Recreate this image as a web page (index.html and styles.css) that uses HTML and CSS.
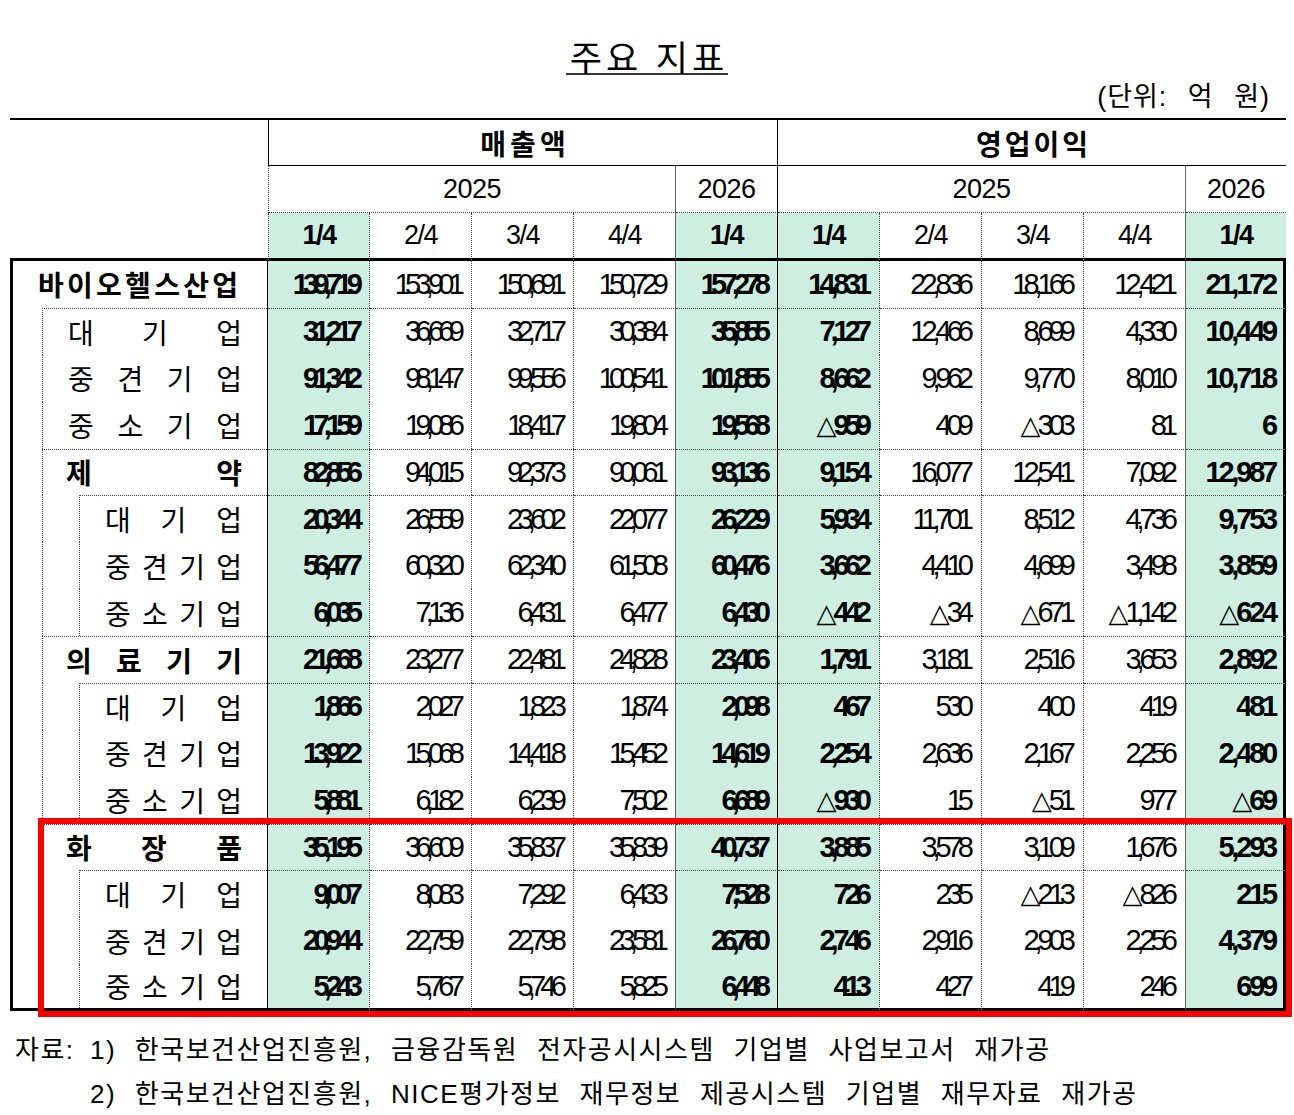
FILE: index.html
```html
<!DOCTYPE html>
<html lang="ko">
<head>
<meta charset="utf-8">
<title>주요 지표</title>
<link rel="stylesheet" href="styles.css">
</head>
<body>
<div class="page">
  <div class="title-wrap"><h1 class="title">주요 지표</h1></div>
  <div class="unit">(단위: 억 원)</div>

  <div class="table-wrap">
    <div class="grid">
      <div class="h-label"></div>
      <div class="h-group h-sales">매출액</div>
      <div class="h-group h-profit">영업이익</div>

      <div class="h-year y-s25">2025</div>
      <div class="h-year y-s26">2026</div>
      <div class="h-year y-p25">2025</div>
      <div class="h-year y-p26">2026</div>

      <div class="qrow">
        <div class="q">1/4</div><div class="q">2/4</div><div class="q">3/4</div><div class="q">4/4</div><div class="q">1/4</div>
        <div class="q">1/4</div><div class="q">2/4</div><div class="q">3/4</div><div class="q">4/4</div><div class="q">1/4</div>
      </div>

      <!-- 바이오헬스산업 -->
      <div class="row">
        <div class="lab"><div class="t t-top"><span>바</span><span>이</span><span>오</span><span>헬</span><span>스</span><span>산</span><span>업</span></div></div>
        <div class="v">139,719</div><div class="v">153,901</div><div class="v">150,691</div><div class="v">150,729</div><div class="v">157,278</div>
        <div class="v">14,831</div><div class="v">22,836</div><div class="v">18,166</div><div class="v">12,421</div><div class="v">21,172</div>
      </div>
      <div class="row start">
        <div class="lab"><div class="b1 bt"><div class="t t-sub1"><span>대</span><span>기</span><span>업</span></div></div></div>
        <div class="v">31,217</div><div class="v">36,669</div><div class="v">32,717</div><div class="v">30,384</div><div class="v">35,855</div>
        <div class="v">7,127</div><div class="v">12,466</div><div class="v">8,699</div><div class="v">4,330</div><div class="v">10,449</div>
      </div>
      <div class="row">
        <div class="lab"><div class="b1"><div class="t t-sub1"><span>중</span><span>견</span><span>기</span><span>업</span></div></div></div>
        <div class="v">91,342</div><div class="v">98,147</div><div class="v">99,556</div><div class="v">100,541</div><div class="v">101,855</div>
        <div class="v">8,662</div><div class="v">9,962</div><div class="v">9,770</div><div class="v">8,010</div><div class="v">10,718</div>
      </div>
      <div class="row">
        <div class="lab"><div class="b1"><div class="t t-sub1"><span>중</span><span>소</span><span>기</span><span>업</span></div></div></div>
        <div class="v">17,159</div><div class="v">19,086</div><div class="v">18,417</div><div class="v">19,804</div><div class="v">19,568</div>
        <div class="v"><span class="tri">△</span>959</div><div class="v">409</div><div class="v"><span class="tri">△</span>303</div><div class="v">81</div><div class="v">6</div>
      </div>

      <!-- 제약 -->
      <div class="row start">
        <div class="lab"><div class="b1 bt"><div class="t t-grp"><span>제</span><span>약</span></div></div></div>
        <div class="v">82,856</div><div class="v">94,015</div><div class="v">92,373</div><div class="v">90,061</div><div class="v">93,136</div>
        <div class="v">9,154</div><div class="v">16,077</div><div class="v">12,541</div><div class="v">7,092</div><div class="v">12,987</div>
      </div>
      <div class="row start">
        <div class="lab"><div class="b1"><div class="b2 bt"><div class="t t-sub2"><span>대</span><span>기</span><span>업</span></div></div></div></div>
        <div class="v">20,344</div><div class="v">26,559</div><div class="v">23,602</div><div class="v">22,077</div><div class="v">26,229</div>
        <div class="v">5,934</div><div class="v">11,701</div><div class="v">8,512</div><div class="v">4,736</div><div class="v">9,753</div>
      </div>
      <div class="row">
        <div class="lab"><div class="b1"><div class="b2"><div class="t t-sub2"><span>중</span><span>견</span><span>기</span><span>업</span></div></div></div></div>
        <div class="v">56,477</div><div class="v">60,320</div><div class="v">62,340</div><div class="v">61,508</div><div class="v">60,476</div>
        <div class="v">3,662</div><div class="v">4,410</div><div class="v">4,699</div><div class="v">3,498</div><div class="v">3,859</div>
      </div>
      <div class="row">
        <div class="lab"><div class="b1"><div class="b2"><div class="t t-sub2"><span>중</span><span>소</span><span>기</span><span>업</span></div></div></div></div>
        <div class="v">6,035</div><div class="v">7,136</div><div class="v">6,431</div><div class="v">6,477</div><div class="v">6,430</div>
        <div class="v"><span class="tri">△</span>442</div><div class="v"><span class="tri">△</span>34</div><div class="v"><span class="tri">△</span>671</div><div class="v"><span class="tri">△</span>1,142</div><div class="v"><span class="tri">△</span>624</div>
      </div>

      <!-- 의료기기 -->
      <div class="row start">
        <div class="lab"><div class="b1 bt"><div class="t t-grp"><span>의</span><span>료</span><span>기</span><span>기</span></div></div></div>
        <div class="v">21,668</div><div class="v">23,277</div><div class="v">22,481</div><div class="v">24,828</div><div class="v">23,406</div>
        <div class="v">1,791</div><div class="v">3,181</div><div class="v">2,516</div><div class="v">3,653</div><div class="v">2,892</div>
      </div>
      <div class="row start">
        <div class="lab"><div class="b1"><div class="b2 bt"><div class="t t-sub2"><span>대</span><span>기</span><span>업</span></div></div></div></div>
        <div class="v">1,866</div><div class="v">2,027</div><div class="v">1,823</div><div class="v">1,874</div><div class="v">2,098</div>
        <div class="v">467</div><div class="v">530</div><div class="v">400</div><div class="v">419</div><div class="v">481</div>
      </div>
      <div class="row">
        <div class="lab"><div class="b1"><div class="b2"><div class="t t-sub2"><span>중</span><span>견</span><span>기</span><span>업</span></div></div></div></div>
        <div class="v">13,922</div><div class="v">15,068</div><div class="v">14,418</div><div class="v">15,452</div><div class="v">14,619</div>
        <div class="v">2,254</div><div class="v">2,636</div><div class="v">2,167</div><div class="v">2,256</div><div class="v">2,480</div>
      </div>
      <div class="row">
        <div class="lab"><div class="b1"><div class="b2"><div class="t t-sub2"><span>중</span><span>소</span><span>기</span><span>업</span></div></div></div></div>
        <div class="v">5,881</div><div class="v">6,182</div><div class="v">6,239</div><div class="v">7,502</div><div class="v">6,689</div>
        <div class="v"><span class="tri">△</span>930</div><div class="v">15</div><div class="v"><span class="tri">△</span>51</div><div class="v">977</div><div class="v"><span class="tri">△</span>69</div>
      </div>

      <!-- 화장품 -->
      <div class="row start">
        <div class="lab"><div class="b1 bt"><div class="t t-grp"><span>화</span><span>장</span><span>품</span></div></div></div>
        <div class="v">35,195</div><div class="v">36,609</div><div class="v">35,837</div><div class="v">35,839</div><div class="v">40,737</div>
        <div class="v">3,885</div><div class="v">3,578</div><div class="v">3,109</div><div class="v">1,676</div><div class="v">5,293</div>
      </div>
      <div class="row start">
        <div class="lab"><div class="b1"><div class="b2 bt"><div class="t t-sub2"><span>대</span><span>기</span><span>업</span></div></div></div></div>
        <div class="v">9,007</div><div class="v">8,083</div><div class="v">7,292</div><div class="v">6,433</div><div class="v">7,528</div>
        <div class="v">726</div><div class="v">235</div><div class="v"><span class="tri">△</span>213</div><div class="v"><span class="tri">△</span>826</div><div class="v">215</div>
      </div>
      <div class="row">
        <div class="lab"><div class="b1"><div class="b2"><div class="t t-sub2"><span>중</span><span>견</span><span>기</span><span>업</span></div></div></div></div>
        <div class="v">20,944</div><div class="v">22,759</div><div class="v">22,798</div><div class="v">23,581</div><div class="v">26,760</div>
        <div class="v">2,746</div><div class="v">2,916</div><div class="v">2,903</div><div class="v">2,256</div><div class="v">4,379</div>
      </div>
      <div class="row last">
        <div class="lab"><div class="b1"><div class="b2"><div class="t t-sub2"><span>중</span><span>소</span><span>기</span><span>업</span></div></div></div></div>
        <div class="v">5,243</div><div class="v">5,767</div><div class="v">5,746</div><div class="v">5,825</div><div class="v">6,448</div>
        <div class="v">413</div><div class="v">427</div><div class="v">419</div><div class="v">246</div><div class="v">699</div>
      </div>
    </div>
    <div class="hl-box"></div>
  </div>

  <div class="notes">
    <div class="note-label">자료:</div>
    <div class="note-list">
      <div class="note">1) 한국보건산업진흥원, 금융감독원 전자공시시스템 기업별 사업보고서 재가공</div>
      <div class="note">2) 한국보건산업진흥원, NICE평가정보 재무정보 제공시스템 기업별 재무자료 재가공</div>
    </div>
  </div>
</div>
</body>
</html>
```

FILE: styles.css
```css
* { box-sizing: border-box; }
html, body { margin: 0; padding: 0; background: #fff; }
body {
  font-family: "Liberation Sans", "Noto Sans CJK KR", sans-serif;
  color: #000;
}
.page { width: 1294px; height: 1115px; overflow: hidden; }

/* title */
.title-wrap { height: 76px; padding-top: 44px; text-align: center; }
.title {
  display: inline-block;
  margin: 0;
  padding: 0 0 0 4px;
  font-size: 35px;
  font-weight: 400;
  line-height: 29px;
  letter-spacing: 4px;
  border-bottom: 2px solid #333;
}
.unit {
  height: 42px;
  text-align: right;
  padding-right: 24px;
  font-size: 27px;
  line-height: 42px;
  letter-spacing: 1px;
  word-spacing: 12px;
}

/* table */
.table-wrap {
  position: relative;
  margin-left: 10px;
  width: 1276px;
  border-top: 2px solid #000;
}
.grid {
  display: grid;
  grid-template-columns: 258px repeat(9, 102px) 100px;
  grid-template-rows: 46px 47px 48px repeat(16, 46.875px);
}
.row, .qrow { display: contents; }

.h-label { grid-row: 1 / 4; grid-column: 1; border-bottom: 3px solid #000; }
.h-group {
  grid-column: span 5;
  display: flex; align-items: center; justify-content: center;
  font-size: 28px; font-weight: 700; letter-spacing: 4px;
  border-bottom: 1px solid #000;
}
.h-sales { border-left: 1px solid #000; border-right: 1px solid #000; padding-left: 4px; }
.h-profit { padding-left: 3px; letter-spacing: 3px; }

.h-year {
  display: flex; align-items: center; justify-content: center;
  font-size: 27px;
  letter-spacing: -0.5px;
  border-bottom: 1px dotted #444;
}
.y-s25 { grid-column: span 4; border-left: 1px dotted #444; border-right: 1px solid #666; }
.y-s26 { border-right: 1px solid #000; }
.y-p25 { grid-column: span 4; border-right: 1px solid #666; }

.q {
  display: flex; align-items: center; justify-content: center;
  font-size: 27px;
  border-bottom: 3px solid #000;
  border-right: 1px dotted #444;
  letter-spacing: -1.5px;
}
.qrow > .q:nth-child(1) { border-left: 1px dotted #444; }
.qrow > .q:nth-child(4),
.qrow > .q:nth-child(9) { border-right: 1px solid #666; }
.qrow > .q:nth-child(5) { border-right: 1px solid #000; }
.qrow > .q:nth-child(10) { border-right: 0; }
.qrow > .q:nth-child(1),
.qrow > .q:nth-child(5),
.qrow > .q:nth-child(6),
.qrow > .q:nth-child(10) { background: #cdeee0; font-weight: 700; }

/* label column */
.lab {
  display: flex;
  border-left: 3px solid #000;
  border-right: 1px solid #000;
  font-size: 28px;
}
.b1 { flex: 1; display: flex; margin-left: 29px; border-left: 1px dotted #444; }
.b2 { flex: 1; display: flex; margin-left: 36px; border-left: 1px dotted #444; }
.bt { border-top: 1px dotted #444; }
.t {
  flex: 1;
  display: flex;
  align-items: center;
  justify-content: space-between;
  padding-right: 25px;
}
.t-top { padding-left: 25px; padding-right: 29px; font-weight: 700; }
.t-sub1 { padding-left: 25px; }
.t-grp { padding-left: 23px; font-weight: 700; }
.t-sub2 { padding-left: 25px; }

/* values */
.v {
  display: flex;
  align-items: center;
  justify-content: flex-end;
  font-size: 29px;
  letter-spacing: -5.8px;
  padding-right: 12px;
  border-right: 1px dotted #444;
  white-space: nowrap;
}
.row > .v:nth-child(5),
.row > .v:nth-child(10) { border-right: 1px solid #666; }
.row > .v:nth-child(6) { border-right: 1px solid #000; }
.row > .v:nth-child(n+7) { letter-spacing: -5px; }
.row > .v:nth-child(11) { border-right: 3px solid #000; letter-spacing: -3.2px; padding-right: 8px; }
.row > .v:nth-child(2),
.row > .v:nth-child(6),
.row > .v:nth-child(7),
.row > .v:nth-child(11) { background: #cdeee0; font-weight: 700; }

.row.start > .v { border-top: 1px dotted #444; }
.row.last > div { border-bottom: 3px solid #000; }

.tri {
  font-family: "DejaVu Sans", sans-serif;
  font-size: 26px;
  letter-spacing: -3px;
}

/* highlight overlay */
.hl-box {
  position: absolute;
  left: 28px;
  top: 698px;
  width: 1254px;
  height: 199px;
  border: 6px solid #ff0000;
  pointer-events: none;
}

/* notes */
.notes {
  display: flex;
  margin-top: 17px;
  padding-left: 15px;
  font-size: 26px;
  line-height: 44px;
  letter-spacing: 1.5px;
  word-spacing: 10px;
}
.note-label { width: 75px; flex: none; }
```
